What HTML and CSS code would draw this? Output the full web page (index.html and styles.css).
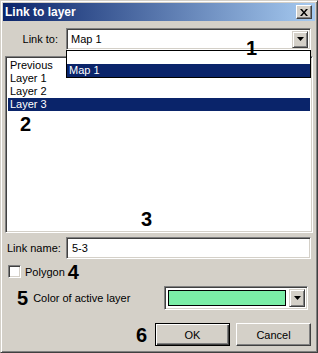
FILE: index.html
```html
<!DOCTYPE html>
<html lang="en">
<head>
  <meta charset="UTF-8" />
  <title>Link to layer</title>
  <link rel="stylesheet" href="styles.css">
</head>
<body>
  <div class="dialog">
    <div class="titlebar">
      <span class="title">Link to layer</span>
      <span class="close-btn">
        <svg width="8" height="7" viewBox="0 0 8 7"><path d="M0 0h2l2 2.5L6 0h2L5 3.5 8 7H6L4 4.5 2 7H0l3-3.5z" fill="#000"/></svg>
      </span>
    </div>

    <div class="content">
      <div class="row link-row">
        <span class="label">Link to:</span>
        <div class="combo">
          <span class="combo-text">Map 1</span>
          <span class="drop-btn"><svg width="7" height="4" viewBox="0 0 7 4"><path d="M0 0h7L3.5 4z" fill="#000"/></svg></span>
        </div>
        <div class="drop-list">
          <div class="drop-item"></div>
          <div class="drop-item selected">Map 1</div>
        </div>
        <span class="mark mark-1">1</span>
      </div>

      <div class="listbox">
        <div class="item">Previous</div>
        <div class="item">Layer 1</div>
        <div class="item">Layer 2</div>
        <div class="item selected">Layer 3</div>
        <span class="mark mark-2">2</span>
        <span class="mark mark-3">3</span>
      </div>

      <div class="row name-row">
        <span class="label">Link name:</span>
        <div class="field">5-3</div>
      </div>

      <div class="row check-row">
        <span class="checkbox"></span>
        <span class="check-label">Polygon</span>
        <span class="num">4</span>
      </div>

      <div class="row color-row">
        <span class="num">5</span>
        <span class="color-label">Color of active layer</span>
        <div class="color-combo">
          <span class="swatch"></span>
          <span class="drop-btn"><svg width="7" height="4" viewBox="0 0 7 4"><path d="M0 0h7L3.5 4z" fill="#000"/></svg></span>
        </div>
      </div>

      <div class="row btn-row">
        <span class="num">6</span>
        <button class="btn default">OK</button>
        <button class="btn">Cancel</button>
      </div>
    </div>
  </div>
</body>
</html>
```

FILE: styles.css
```css
body {
  margin: 0;
  background: #d4d0c8;
  font-family: "Liberation Sans", Arial, sans-serif;
  font-size: 11px;
  color: #000;
}
.dialog {
  width: 318px;
  height: 353px;
  box-sizing: border-box;
  background: #d4d0c8;
  border: 1px solid;
  border-color: #d4d0c8 #404040 #404040 #d4d0c8;
  box-shadow: inset 1px 1px #fff, inset -1px -1px #808080;
  padding: 2px;
  display: flex;
  flex-direction: column;
}
.titlebar {
  height: 18px;
  background: linear-gradient(to right, #0a246a, #a6caf0);
  display: flex;
  align-items: center;
  justify-content: space-between;
  padding: 0 3px 0 2px;
}
.title {
  color: #fff;
  font-weight: bold;
  font-size: 12px;
}
.close-btn {
  width: 14px;
  height: 12px;
  background: #d4d0c8;
  border: 1px solid;
  border-color: #fff #404040 #404040 #fff;
  box-shadow: inset -1px -1px #808080;
  display: flex;
  align-items: center;
  justify-content: center;
}
.content {
  padding: 0 2px 0 2px;
  display: flex;
  flex-direction: column;
}
.row {
  display: flex;
  align-items: center;
}
.label {
  width: 58px;
  text-align: right;
  padding-right: 3px;
  box-sizing: border-box;
  flex: none;
}
.link-row {
  position: relative;
  margin-top: 7px;
  z-index: 2;
}
.link-row .label {
  width: 61px;
  padding-right: 8px;
}
.combo, .field, .color-combo {
  height: 22px;
  box-sizing: border-box;
  background: #fff;
  border: 1px solid;
  border-color: #808080 #fff #fff #808080;
  box-shadow: inset 1px 1px #404040, inset -1px -1px #d4d0c8;
  display: flex;
  align-items: center;
}
.combo {
  flex: 1;
  margin-right: 2px;
  padding: 2px;
}
.combo-text {
  flex: 1;
  padding-left: 2px;
}
.drop-btn {
  width: 16px;
  height: 17px;
  box-sizing: border-box;
  background: #d4d0c8;
  border: 1px solid;
  border-color: #d4d0c8 #404040 #404040 #d4d0c8;
  box-shadow: inset 1px 1px #fff, inset -1px -1px #808080;
  display: flex;
  align-items: center;
  justify-content: center;
}
.drop-list {
  position: absolute;
  left: 61px;
  top: 22px;
  width: 245px;
  box-sizing: border-box;
  background: #fff;
  border: 1px solid #000;
}
.drop-item {
  height: 13px;
  line-height: 13px;
  padding-left: 2px;
}
.selected {
  background: #0a246a;
  color: #fff;
}
.mark {
  position: absolute;
  font-weight: bold;
  font-size: 20px;
  line-height: 1;
  color: #000;
}
.mark-1 { left: 241px; top: 10px; }
.listbox {
  position: relative;
  margin-top: 6px;
  height: 177px;
  box-sizing: border-box;
  background: #fff;
  border: 1px solid;
  border-color: #808080 #fff #fff #808080;
  box-shadow: inset 1px 1px #404040, inset -1px -1px #d4d0c8;
  padding: 2px 2px;
}
.item {
  height: 13px;
  line-height: 13px;
  padding-left: 2px;
}
.mark-2 { left: 14px; top: 57px; }
.mark-3 { left: 135px; top: 152px; }
.name-row {
  margin-top: 4px;
}
.name-row .label {
  width: 61px;
  text-align: left;
  padding-left: 2px;
}
.field {
  flex: 1;
  margin-right: 2px;
  padding-left: 5px;
}
.check-row {
  margin-top: 5px;
  padding-left: 3px;
  height: 15px;
}
.checkbox {
  width: 13px;
  height: 13px;
  box-sizing: border-box;
  background: #fff;
  border: 1px solid;
  border-color: #808080 #fff #fff #808080;
  box-shadow: inset 1px 1px #404040, inset -1px -1px #d4d0c8;
}
.check-label {
  margin-left: 4px;
}
.num {
  font-weight: bold;
  font-size: 20px;
  line-height: 20px;
}
.check-row .num {
  margin-left: 3px;
}
.color-row {
  margin-top: 7px;
  padding-left: 12px;
}
.color-label {
  margin-left: 5px;
  flex: 1;
}
.color-combo {
  width: 144px;
  height: 24px;
  margin-right: 5px;
  padding: 2px;
}
.swatch {
  flex: 1;
  align-self: stretch;
  margin: 1px 3px 1px 1px;
  background: #7aeda6;
  border: 1px solid #000;
}
.color-combo .drop-btn {
  height: 18px;
}
.btn-row {
  margin-top: 13px;
  justify-content: flex-end;
  padding-right: 2px;
}
.btn-row .num {
  margin-right: 8px;
}
.btn {
  width: 75px;
  height: 23px;
  box-sizing: border-box;
  font-family: "Liberation Sans", Arial, sans-serif;
  font-size: 11px;
  color: #000;
  background: #d4d0c8;
  border: 1px solid;
  border-color: #fff #404040 #404040 #fff;
  box-shadow: inset -1px -1px #808080;
  padding: 0;
}
.btn.default {
  border: 1px solid #000;
  box-shadow: inset 1px 1px #fff, inset -1px -1px #404040, inset -2px -2px #808080;
  margin-right: 6px;
}
```
